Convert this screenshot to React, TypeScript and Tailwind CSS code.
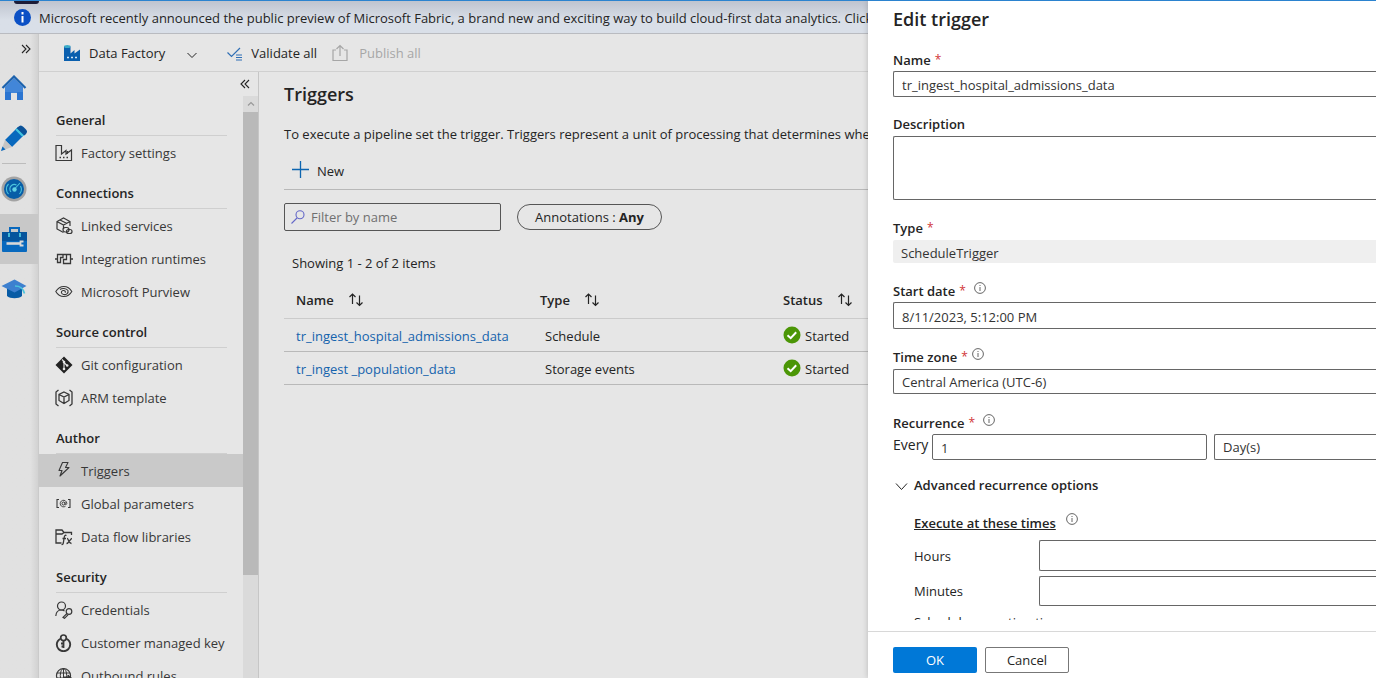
import React from "react";
import type { ReactNode } from "react";

const font = "font-['Open_Sans','Noto_Sans',sans-serif]";

function Svg({ size = 18, box = 18, children, className = "" }: { size?: number; box?: number; children: ReactNode; className?: string }) {
  return (
    <svg width={size} height={size} viewBox={`0 0 ${box} ${box}`} fill="none" stroke="currentColor" className={`shrink-0 ${className}`} aria-hidden="true">
      {children}
    </svg>
  );
}

const FactoryOutline = () => (
  <Svg>
    <path d="M1 1.5h5.5V10l4.5-3.5V10l5.5-4V16.5H1z" strokeWidth="1.2" />
    <path d="M4.5 13.5h1.5M8 13.5h1.5M11.5 13.5H13M12.5 7l-.5 3" strokeWidth="1.4" />
  </Svg>
);
const LinkedIcon = () => (
  <Svg>
    <path d="M8.5 15.5L2 12V4.5L8.5 1l6.5 3.5V9M2 4.5L8.5 8 15 4.5M8.5 8v4M5 3l6.5 3.3" strokeWidth="1.2" />
    <rect x="8" y="10.5" width="6" height="4.5" rx="2.2" strokeWidth="1.2" />
    <rect x="11.5" y="12.5" width="5.5" height="4" rx="2" strokeWidth="1.2" />
  </Svg>
);
const RuntimeIcon = () => (
  <Svg>
    <path d="M0 9h2.500M15.500 9H18M8 4.500H2.500v8h3V7.500H8zM8 4.500h3.500v5h-3v4h7v-9H12" strokeWidth="1.300" />
  </Svg>
);
const EyeIcon = () => (
  <Svg>
    <path d="M.8 8.500C3 5 5.500 3.500 8.800 3.500s6 1.500 8 5c-2 3.500-4.700 5-8 5s-6-1.500-8-5z" strokeWidth="1.100" />
    <path d="M5 6.500C7 5 11 5 13 7.500c.7 3-2 4.500-4.500 4C6 11 5.500 8 8 7.500c2-.3 3 1 2 2.200" strokeWidth="1.100" />
  </Svg>
);
const GitIcon = () => (
  <Svg>
    <path d="M9 .5L17.500 9 9 17.500.5 9z" fill="#222" stroke="none" />
    <path d="M7 3.500l2 2v8M9 6.500l3 3" stroke="#e6e6e6" strokeWidth="1.100" />
    <circle cx="9" cy="6" r="1.300" fill="#e6e6e6" stroke="none" />
    <circle cx="9" cy="13" r="1.300" fill="#e6e6e6" stroke="none" />
    <circle cx="12.200" cy="9.500" r="1.300" fill="#e6e6e6" stroke="none" />
  </Svg>
);
const ArmIcon = () => (
  <Svg>
    <path d="M3.500 1L1 3v12l2.500 2M14.500 1L17 3v12l-2.500 2" strokeWidth="1.300" />
    <path d="M9 3l5 2.500v6L9 14.500l-5-3v-6zM4 5.500L9 8l5-2.500M9 8v6.500" strokeWidth="1.300" />
  </Svg>
);
const BoltIcon = () => (
  <Svg>
    <path d="M7.500 .5h5.500L10.500 5.500H14L5 14l2-5.500H4z" strokeWidth="1.100" strokeLinejoin="round" />
  </Svg>
);
const ParamsIcon = () => (
  <Svg>
    <path d="M4 4.500H2v8h2M13 4.500h2v8h-2" strokeWidth="1.100" />
    <circle cx="8.500" cy="8.500" r="1.500" />
    <path d="M10 7v2c.3 1 1.800.8 1.800-.7A3.300 3.300 0 1 0 10.500 11.200" strokeWidth=".9" />
  </Svg>
);
const LibraryIcon = () => (
  <Svg>
    <path d="M6.500 15H1V2h6l2 2.500h7.500V7M1 6h6l2-1.500" strokeWidth="1.300" />
    <path d="M11.500 7.500c-1.500-.7-2 .3-2.300 2L8.300 15c-.3 1.300-.8 1.800-1.800 1.500M7.500 10.500h3.500M12 10.500c1.500-.3 1.500 5 4.500 5M17 10.500c-2 0-3 5-5.500 5" strokeWidth="1.300" />
  </Svg>
);
const CredentialsIcon = () => (
  <Svg>
    <circle cx="6.500" cy="5" r="4" strokeWidth="1.200" />
    <path d="M.8 15c.3-4 2.500-6 5.500-6 1.500 0 2.500.4 3.200 1" strokeWidth="1.200" />
    <circle cx="14" cy="10.500" r="2.800" strokeWidth="1.200" />
    <path d="M12 12.500L8 16.300l1.500 1 3.500-3.500" strokeWidth="1.200" />
  </Svg>
);
const KeyIcon = () => (
  <Svg>
    <path d="M5.500 4.800C3 6 1.800 8 1.800 10.500a6.700 6.700 0 0 0 13.400 0c0-2.500-1.200-4.500-3.700-5.700" strokeWidth="1.900" />
    <circle cx="8.500" cy="3.800" r="2.800" strokeWidth="1.700" />
    <path d="M8.500 6.500V14M8.500 9.500H6M8.500 12.500H6.500" strokeWidth="1.800" />
  </Svg>
);
const GlobeIcon = () => (
  <Svg>
    <circle cx="8.500" cy="8.500" r="7" strokeWidth="1.200" />
    <ellipse cx="8.500" cy="8.500" rx="3.200" ry="7" />
    <path d="M2 6h13M2 11h7M8.500 1.500v14" />
    <path d="M9 10h4V8l4 3.500-4 3.500v-2H9z" fill="currentColor" />
  </Svg>
);

const Info = () => (
  <Svg size={12} box={12} className="text-[#555]">
    <circle cx="6" cy="6" r="5.400" strokeWidth=".9" />
    <path d="M6 5v4M6 3v1" strokeWidth=".9" />
  </Svg>
);

const DoubleChevron = ({ left = false }: { left?: boolean }) => (
  <Svg size={10} box={10} className={left ? "rotate-180" : ""}>
    <path d="M1 1l4 4-4 4M5 1l4 4-4 4" strokeWidth="1.100" />
  </Svg>
);

const HomeIcon = () => (
  <Svg size={26} box={26}>
    <path d="M4 12l9-9 9 9v13h-6v-7h-6v7H4z" fill="#4286d8" stroke="none" />
    <path d="M4 17h6v8H4zM16 17h6v8h-6z" fill="#2b75d1" stroke="none" />
    <path d="M1.500 13L13 1.500 24.500 13" stroke="#1c62ad" strokeWidth="2.200" />
    <path d="M10 18h6v7h-6z" fill="#e3e3e3" stroke="none" />
  </Svg>
);
const PencilIcon = () => (
  <Svg size={26} box={26}>
    <path d="M4 15L17 2l7 7-13 13z" fill="#0868bd" stroke="none" />
    <path d="M17 2c2-2 3.500-2 5.500 0l2 2c2 2 2 3.500 0 5.500L23.500 10.500 15.500 3.500z" fill="#0b5299" stroke="none" />
    <path d="M15 4l7 7" stroke="#43c5df" strokeWidth="2.200" />
    <path d="M4 15l7 7-11 4z" fill="#c4c4c4" stroke="none" />
    <path d="M1.500 21.500L4.500 24.500 0 26z" fill="#0868bd" stroke="none" />
  </Svg>
);
const MonitorIcon = () => (
  <Svg size={26} box={26}>
    <circle cx="13" cy="13" r="12.500" fill="#a3a3a3" stroke="none" />
    <circle cx="13" cy="13" r="10" fill="#075da7" stroke="none" />
    <path d="M7.500 18a7 7 0 0 1 0-10M18.500 18a7 7 0 0 0 1-8M10 16a4.500 4.500 0 0 1 .5-6.500 4.500 4.500 0 0 1 5-.5M13.500 13L19 7" stroke="#4bc4dc" strokeWidth="1.100" />
    <circle cx="13.500" cy="13.500" r="2.200" fill="#62d2e5" stroke="none" />
  </Svg>
);
const ToolboxIcon = () => (
  <Svg size={26} box={26}>
    <path d="M9 6V2h9v4" stroke="#0868bd" strokeWidth="2" />
    <rect x="1" y="6" width="25" height="20" rx="1" fill="#0869be" stroke="none" />
    <rect x="1" y="6" width="25" height="9" fill="#06559d" stroke="none" />
    <path d="M8 7v4M19 7v4" stroke="#4bc4dc" strokeWidth="1.800" />
    <path d="M5.500 17.500h14" stroke="#d8d8d8" strokeWidth="2.600" />
    <path d="M22.500 15.500h-3v4h3" stroke="#d8d8d8" strokeWidth="1.800" />
  </Svg>
);
const LearnIcon = () => (
  <Svg size={26} box={26}>
    <path d="M6 11h15v9c-3 3-12 3-15 0z" fill="#075ba5" stroke="none" />
    <path d="M.5 10L13.500 3.500l12 6.500-12 6.500z" fill="#3d80cf" stroke="none" />
    <path d="M14 10c5 0 8 1.500 9.500 7.500" stroke="#4bc4dc" strokeWidth="1.600" />
  </Svg>
);

type Item = { label: string; icon: ReactNode; active?: boolean };
const sections: { title: string; items: Item[] }[] = [
  { title: "General", items: [{ label: "Factory settings", icon: <FactoryOutline /> }] },
  {
    title: "Connections",
    items: [
      { label: "Linked services", icon: <LinkedIcon /> },
      { label: "Integration runtimes", icon: <RuntimeIcon /> },
      { label: "Microsoft Purview", icon: <EyeIcon /> },
    ],
  },
  {
    title: "Source control",
    items: [
      { label: "Git configuration", icon: <GitIcon /> },
      { label: "ARM template", icon: <ArmIcon /> },
    ],
  },
  {
    title: "Author",
    items: [
      { label: "Triggers", icon: <BoltIcon />, active: true },
      { label: "Global parameters", icon: <ParamsIcon /> },
      { label: "Data flow libraries", icon: <LibraryIcon /> },
    ],
  },
  {
    title: "Security",
    items: [
      { label: "Credentials", icon: <CredentialsIcon /> },
      { label: "Customer managed key", icon: <KeyIcon /> },
      { label: "Outbound rules", icon: <GlobeIcon /> },
    ],
  },
];

function Sidebar() {
  return (
    <aside className="flex w-[220px] shrink-0 flex-col border-r border-[#c6c6c6]">
      <div className="flex h-6 shrink-0 items-center justify-end pr-2">
        <button aria-label="Collapse menu"><DoubleChevron left /></button>
      </div>
      <div className="flex min-h-0 flex-1">
        <nav className="min-w-0 flex-1 overflow-hidden">
          {sections.map((s) => (
            <section key={s.title}>
              <h2 className="mr-4 ml-[17px] h-10 border-b border-[#cfcfcf] pt-3.5 leading-5 font-semibold">{s.title}</h2>
              {s.items.map((it) => (
                <a key={it.label} href="#" className={`flex h-[33px] items-center gap-2 pl-4 text-[#383838] ${it.active ? "bg-[#c9c9c9]" : ""}`}>
                  {it.icon}
                  <span className="pt-[3px]">{it.label}</span>
                </a>
              ))}
            </section>
          ))}
        </nav>
        <div className="flex w-[15px] shrink-0 flex-col bg-[#dadada]">
          <div className="flex h-4 items-center justify-center text-[#999]">
            <Svg size={8} box={8}><path d="M1 5.500l3-3 3 3" strokeWidth="1.200" /></Svg>
          </div>
          <div className="h-[463px] bg-[#b9b9b9]" />
        </div>
      </div>
    </aside>
  );
}

function Rail() {
  return (
    <nav className="flex w-[39px] shrink-0 flex-col border-r border-[#cacaca] bg-linear-to-r from-[#e1e1e1] from-80% to-[#d2d2d2]" aria-label="Hubs">
      <button className="flex h-[29px] items-center justify-end pr-[7px]" aria-label="Expand"><DoubleChevron /></button>
      <a href="#" aria-label="Home" className="flex h-[50px] items-center pl-px"><HomeIcon /></a>
      <a href="#" aria-label="Author" className="flex h-[50px] items-center pl-px"><PencilIcon /></a>
      <div className="mr-3 ml-0.5 border-b border-[#bcbcbc]" />
      <a href="#" aria-label="Monitor" className="flex h-[50px] items-center pl-px"><MonitorIcon /></a>
      <a href="#" aria-label="Manage" className="flex h-[50px] items-center bg-[#c8c8c8] pl-px"><ToolboxIcon /></a>
      <a href="#" aria-label="Learning center" className="flex h-[50px] items-center pl-px"><LearnIcon /></a>
    </nav>
  );
}

function SortHead({ children }: { children: string }) {
  return (
    <button className="flex items-center gap-3.5 font-semibold">
      <span className="pt-0.5">{children}</span>
      <Svg size={16} box={16}>
        <path d="M4.500 12V2M1.500 5l3-3 3 3M11.500 3.500v10M8.500 10.500l3 3 3-3" strokeWidth="1.200" />
      </Svg>
    </button>
  );
}

const rows = [
  { name: "tr_ingest_hospital_admissions_data", type: "Schedule", status: "Started" },
  { name: "tr_ingest _population_data", type: "Storage events", status: "Started" },
];

function Toolbar() {
  return (
    <div className="flex h-[38px] shrink-0 items-center border-b border-[#d0d0d0] pl-6 whitespace-nowrap">
      <button className="flex items-center gap-2">
        <Svg>
          <path d="M1 2.500h6.500v7l4-3.500v3.500l5.500-4V17H1z" fill="#0a5fae" stroke="none" />
          <ellipse cx="4.250" cy="2.500" rx="3.250" ry="1.500" fill="#3cabc8" stroke="none" />
          <path d="M4 13.500h2M8 13.500h2M12 13.500h2" stroke="#d5e8f5" strokeWidth="1.500" />
        </Svg>
        <span className="pt-[3px]">Data Factory</span>
        <Svg size={10} box={10} className="mt-1 ml-3.5"><path d="M.5 3L5 7.500 9.500 3" /></Svg>
      </button>
      <button className="ml-[30px] flex items-center gap-2">
        <Svg size={16} box={16} className="text-[#2f6fb5]">
          <path d="M.5 7.500l4 4L13 3" strokeWidth="1.200" />
          <path d="M9 10h6M9 12.500h6M9 15h6" strokeWidth="1.200" />
        </Svg>
        <span className="pt-[3px]">Validate all</span>
      </button>
      <button className="ml-3.5 flex items-center gap-2.5 text-[#a6a6a6]" disabled>
        <Svg><path d="M5 6H2v10.500h14V6h-3M9 12V1.500M5.500 5L9 1.500 12.500 5" strokeWidth="1.200" /></Svg>
        <span className="pt-[3px]">Publish all</span>
      </button>
    </div>
  );
}

function Triggers() {
  return (
    <main className="min-w-0 flex-1 overflow-hidden pl-[25px] whitespace-nowrap">
      <h1 className="mt-2.5 text-lg leading-6 font-semibold">Triggers</h1>
      <p className="mt-[18px] leading-5">To execute a pipeline set the trigger. Triggers represent a unit of processing that determines when</p>
      <div className="mt-3 flex h-[34px] items-start border-b border-[#b8b8b8] pt-0.5 pl-2">
        <button className="flex items-center gap-2">
          <Svg size={17} box={17} className="text-[#0d65b0]"><path d="M8.500 0v17M0 8.500h17" strokeWidth="1.300" /></Svg>
          <span className="pt-[3px] leading-5">New</span>
        </button>
      </div>
      <div className="mt-[13px] flex items-center gap-4">
        <label className="flex h-7 w-[217px] items-center gap-1.5 rounded-xs border border-[#555] px-1.5">
          <Svg size={14} box={14} className="text-[#6468c8]">
            <circle cx="9" cy="4.800" r="4" strokeWidth="1.100" />
            <path d="M6 8l-5.500 5.500" strokeWidth="1.100" />
          </Svg>
          <input aria-label="Filter by name" placeholder="Filter by name" className="w-full min-w-0 bg-transparent pt-0.5 outline-none placeholder:text-[#707070]" />
        </label>
        <button className="h-[26px] w-[145px] rounded-full border border-[#555] pt-0.5">
          Annotations : <b>Any</b>
        </button>
      </div>
      <p className="mt-[22px] pl-2 leading-5">Showing 1 - 2 of 2 items</p>
      <table className="mt-[9px] w-[700px] table-fixed border-collapse text-left">
        <thead>
          <tr className="h-9 border-b border-[#cbcbcb]">
            <th className="w-[244px] pl-3"><SortHead>Name</SortHead></th>
            <th className="w-[243px] pl-3"><SortHead>Type</SortHead></th>
            <th className="pl-3"><SortHead>Status</SortHead></th>
          </tr>
        </thead>
        <tbody>
          {rows.map((r) => (
            <tr key={r.name} className="h-[33px] border-b border-[#b9b9b9]">
              <td className="pt-1 pl-3"><a href="#" className="text-[#1463ad]">{r.name}</a></td>
              <td className="pt-1 pl-[17px]">{r.type}</td>
              <td className="pl-3">
                <span className="flex items-center gap-1">
                  <Svg size={18}>
                    <circle cx="9" cy="9" r="8.500" fill="#4b9606" stroke="none" />
                    <path d="M4.500 9.200l3.200 3 5.500-6" stroke="#fff" strokeWidth="2" />
                  </Svg>
                  <span className="pt-1">{r.status}</span>
                </span>
              </td>
            </tr>
          ))}
        </tbody>
      </table>
    </main>
  );
}

const field = "block w-full rounded-l-xs border border-r-0 border-[#666] bg-white pl-2 text-[#333] outline-none";
const label = "flex h-5 items-center font-semibold";
const Star = () => <span className="mb-0.5 ml-1 text-xs font-normal text-[#d13438]">*</span>;

function TriggerPanel() {
  return (
    <section className="z-10 flex w-[508px] shrink-0 flex-col bg-white shadow-[0_0_6px_rgba(0,0,0,0.2)]" aria-labelledby="panel-title">
      <div className="min-h-0 flex-1 overflow-hidden pl-[25px]">
        <h2 id="panel-title" className="mt-1.5 text-lg leading-6 font-semibold">Edit trigger</h2>
        <label htmlFor="name" className={`${label} mt-5`}>Name<Star /></label>
        <input id="name" defaultValue="tr_ingest_hospital_admissions_data" className={`${field} h-[26px] pt-px`} />
        <label htmlFor="desc" className={`${label} mt-[18px]`}>Description</label>
        <textarea id="desc" className={`${field} mt-px h-16 resize-none`} />
        <label htmlFor="type" className={`${label} mt-[19px]`}>Type<Star /></label>
        <input id="type" readOnly defaultValue="ScheduleTrigger" className="mt-px block h-[23px] w-full rounded-l-xs bg-[#efefef] pt-0.5 pl-2 text-[#333] outline-none" />
        <div className="mt-[19px] flex items-start gap-2">
          <label htmlFor="start" className={label}>Start date<Star /></label><Info />
        </div>
        <input id="start" defaultValue="8/11/2023, 5:12:00 PM" className={`${field} h-[27px] pt-0.5`} />
        <div className="mt-[19px] flex items-start gap-1">
          <label htmlFor="zone" className={label}>Time zone<Star /></label><Info />
        </div>
        <select id="zone" className={`${field} mt-px h-[25px] appearance-none pt-0.5`}><option>Central America (UTC-6)</option></select>
        <div className="mt-5 flex items-start gap-2">
          <label htmlFor="every" className={label}>Recurrence<Star /></label><Info />
        </div>
        <div className="flex">
          <label htmlFor="every" className="w-[39px] text-sm leading-[22px]">Every</label>
          <input id="every" defaultValue="1" className="h-[26px] w-[275px] rounded-xs border border-[#666] pt-0.5 pl-2 text-[#333]" />
          <select aria-label="Recurrence unit" className="ml-[7px] h-[26px] min-w-0 flex-1 appearance-none rounded-l-xs border border-r-0 border-[#666] pt-0.5 pl-2 text-[#333]"><option>Day(s)</option></select>
        </div>
        <button className="mt-4 flex h-5 items-center gap-1.5 pl-0.5 font-semibold">
          <Svg size={13} box={13}><path d="M1 3.500L6.500 9.500 12 3.500" /></Svg>
          Advanced recurrence options
        </button>
        <div className="pl-[21px]">
          <div className="mt-[17px] flex items-start gap-2.5">
            <h3 className="leading-5 font-semibold underline">Execute at these times</h3><Info />
          </div>
          <div className="mt-[7px] flex items-center">
            <label htmlFor="hours" className="w-[125px] pt-0.5">Hours</label>
            <input id="hours" className="h-[31px] min-w-0 flex-1 rounded-l-xs border border-r-0 border-[#666]" />
          </div>
          <div className="mt-[5px] flex items-center">
            <label htmlFor="minutes" className="w-[125px] pt-0.5">Minutes</label>
            <input id="minutes" className="h-[30px] min-w-0 flex-1 rounded-l-xs border border-r-0 border-[#666]" />
          </div>
          <div className="mt-1.5 h-2 overflow-hidden leading-5"><p>Schedule execution times</p></div>
        </div>
      </div>
      <footer className="flex h-[47px] shrink-0 items-start gap-2 border-t border-[#d8d8d8] pt-[15px] pl-[25px]">
        <button className="h-[26px] w-[84px] rounded-xs bg-[#0078d7] pt-0.5 text-white">OK</button>
        <button className="h-[26px] w-[84px] rounded-xs border border-[#777] pt-0.5">Cancel</button>
      </footer>
    </section>
  );
}

export default function App() {
  return (
    <div className={`flex h-screen flex-col overflow-hidden border-t border-[#2b83cf] text-[13px] text-[#242424] ${font}`}>
      <div className="flex min-h-0 flex-1">
        <div className="relative flex min-w-0 flex-1 flex-col bg-[#e6e6e6]">
          <div className="absolute top-0 left-3.5 h-[3px] w-[25px] rounded-b bg-[#1c1c38]" />
          <div className="flex h-[33px] shrink-0 items-center gap-2 overflow-hidden border-b border-[#b9bbc0] bg-linear-to-b from-[#bfc4cf] to-[#d9dfe8] to-60% pl-3.5 whitespace-nowrap">
            <Svg size={17} box={17}>
              <circle cx="8.500" cy="8.500" r="8.500" fill="#0b50c5" stroke="none" />
              <path d="M8.500 7v6.500M8.500 3v2.500" stroke="#fff" strokeWidth="2" />
            </Svg>
            <p className="pt-[3px]">Microsoft recently announced the public preview of Microsoft Fabric, a brand new and exciting way to build cloud-first data analytics. Click</p>
          </div>
          <div className="flex min-h-0 flex-1">
            <Rail />
            <div className="flex min-w-0 flex-1 flex-col">
              <Toolbar />
              <div className="flex min-h-0 flex-1">
                <Sidebar />
                <Triggers />
              </div>
            </div>
          </div>
        </div>
        <TriggerPanel />
      </div>
    </div>
  );
}
